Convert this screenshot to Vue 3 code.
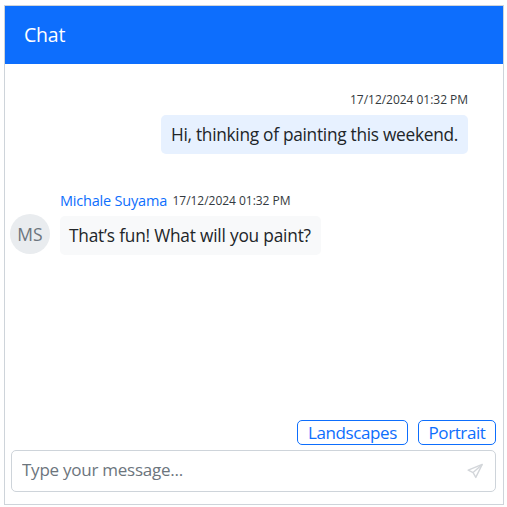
<script setup>
import { ref } from 'vue'

const message = ref('')
const suggestions = [
  { label: 'Landscapes', kind: 'wide' },
  { label: 'Portrait', kind: 'narrow' },
]
</script>

<template>
  <main class="chat">
    <header class="header">Chat</header>
    <section class="messages">
      <article class="message sent">
        <time class="time">17/12/2024 01:32 PM</time>
        <div class="bubble">Hi, thinking of painting this weekend.</div>
      </article>
      <article class="message received">
        <div class="avatar">MS</div>
        <div class="content">
          <div class="meta">
            <span class="author">Michale Suyama</span>
            <time class="time">17/12/2024 01:32 PM</time>
          </div>
          <div class="bubble">That’s fun! What will you paint?</div>
        </div>
      </article>
    </section>
    <footer class="footer">
      <div class="suggestions">
        <button v-for="s in suggestions" :key="s.label" class="suggestion" :class="s.kind">{{ s.label }}</button>
      </div>
      <div class="composer">
        <input v-model="message" class="input" placeholder="Type your message..." />
        <svg class="send" viewBox="0 0 16 16" width="16" height="16" fill="none" stroke="#d3d6da" stroke-width="1.4" stroke-linejoin="round">
          <path d="M15.2 1.4 1.2 7.2l4.9 2.4L8.8 14.4Z" />
          <path d="M15.2 1.4 6.1 9.6" />
        </svg>
      </div>
    </footer>
  </main>
</template>

<style>
body {
  background: #fff;
}
</style>

<style scoped>
.chat {
  box-sizing: border-box;
  width: 500px;
  height: 500px;
  margin: 5px 0 0 4px;
  border: 1px solid #ced4da;
  display: flex;
  flex-direction: column;
  font-family: "Open Sans", "Noto Sans", sans-serif;
  font-size: 17px;
  font-weight: 400;
  color: #212529;
  white-space: nowrap;
}
.header {
  box-sizing: border-box;
  height: 58px;
  padding: 0 19px;
  background: #0d6efd;
  color: #fff;
  font-size: 19.5px;
  letter-spacing: -0.2px;
  line-height: 58px;
}
.messages {
  flex: 1;
  padding: 26px 35px 0 5px;
}
.message {
  display: flex;
}
.sent {
  flex-direction: column;
  align-items: flex-end;
}
.time {
  font-size: 12px;
  line-height: 20px;
  letter-spacing: -0.03px;
  color: #343a40;
}
.bubble {
  box-sizing: border-box;
  height: 39px;
  padding: 0 10px;
  border-radius: 5px;
  font-size: 17.3px;
  line-height: 39px;
}
.sent .bubble {
  width: 307px;
  margin-top: 5px;
  background: #e7f1ff;
  letter-spacing: -0.28px;
}
.received {
  margin-top: 37px;
  gap: 10px;
}
.received .bubble {
  width: 261px;
  margin-top: 5px;
  padding-left: 9px;
  background: #f8f9fa;
  letter-spacing: -0.2px;
}
.avatar {
  width: 40px;
  height: 40px;
  margin-top: 23px;
  border-radius: 50%;
  background: #e9ecef;
  color: #6c757d;
  font-size: 17.5px;
  line-height: 40px;
  text-align: center;
}
.meta {
  display: flex;
  height: 20px;
}
.author {
  width: 112.5px;
  color: #0d6efd;
  font-size: 14.5px;
  line-height: 20px;
  letter-spacing: -0.2px;
}
.footer {
  padding: 0 7px 12px 6px;
}
.suggestions {
  display: flex;
  justify-content: flex-end;
  gap: 10px;
}
.suggestion {
  box-sizing: border-box;
  height: 25px;
  padding: 0;
  border: 1px solid #0d6efd;
  border-radius: 5px;
  background: #fff;
  color: #0d6efd;
  font: inherit;
  line-height: 23px;
  letter-spacing: -0.4px;
}
.wide {
  width: 111px;
}
.narrow {
  width: 78px;
}
.composer {
  box-sizing: border-box;
  display: flex;
  align-items: center;
  height: 42px;
  margin-top: 5px;
  padding: 0 12px 0 10px;
  border: 1px solid #ced4da;
  border-radius: 5px;
}
.input {
  flex: 1;
  min-width: 0;
  height: 38px;
  padding: 0 0 3px;
  box-sizing: border-box;
  border: 0;
  outline: 0;
  background: transparent;
  font: inherit;
  letter-spacing: -0.25px;
}
.input::placeholder {
  color: #6c757d;
  opacity: 1;
}
.send {
  display: block;
}
</style>
